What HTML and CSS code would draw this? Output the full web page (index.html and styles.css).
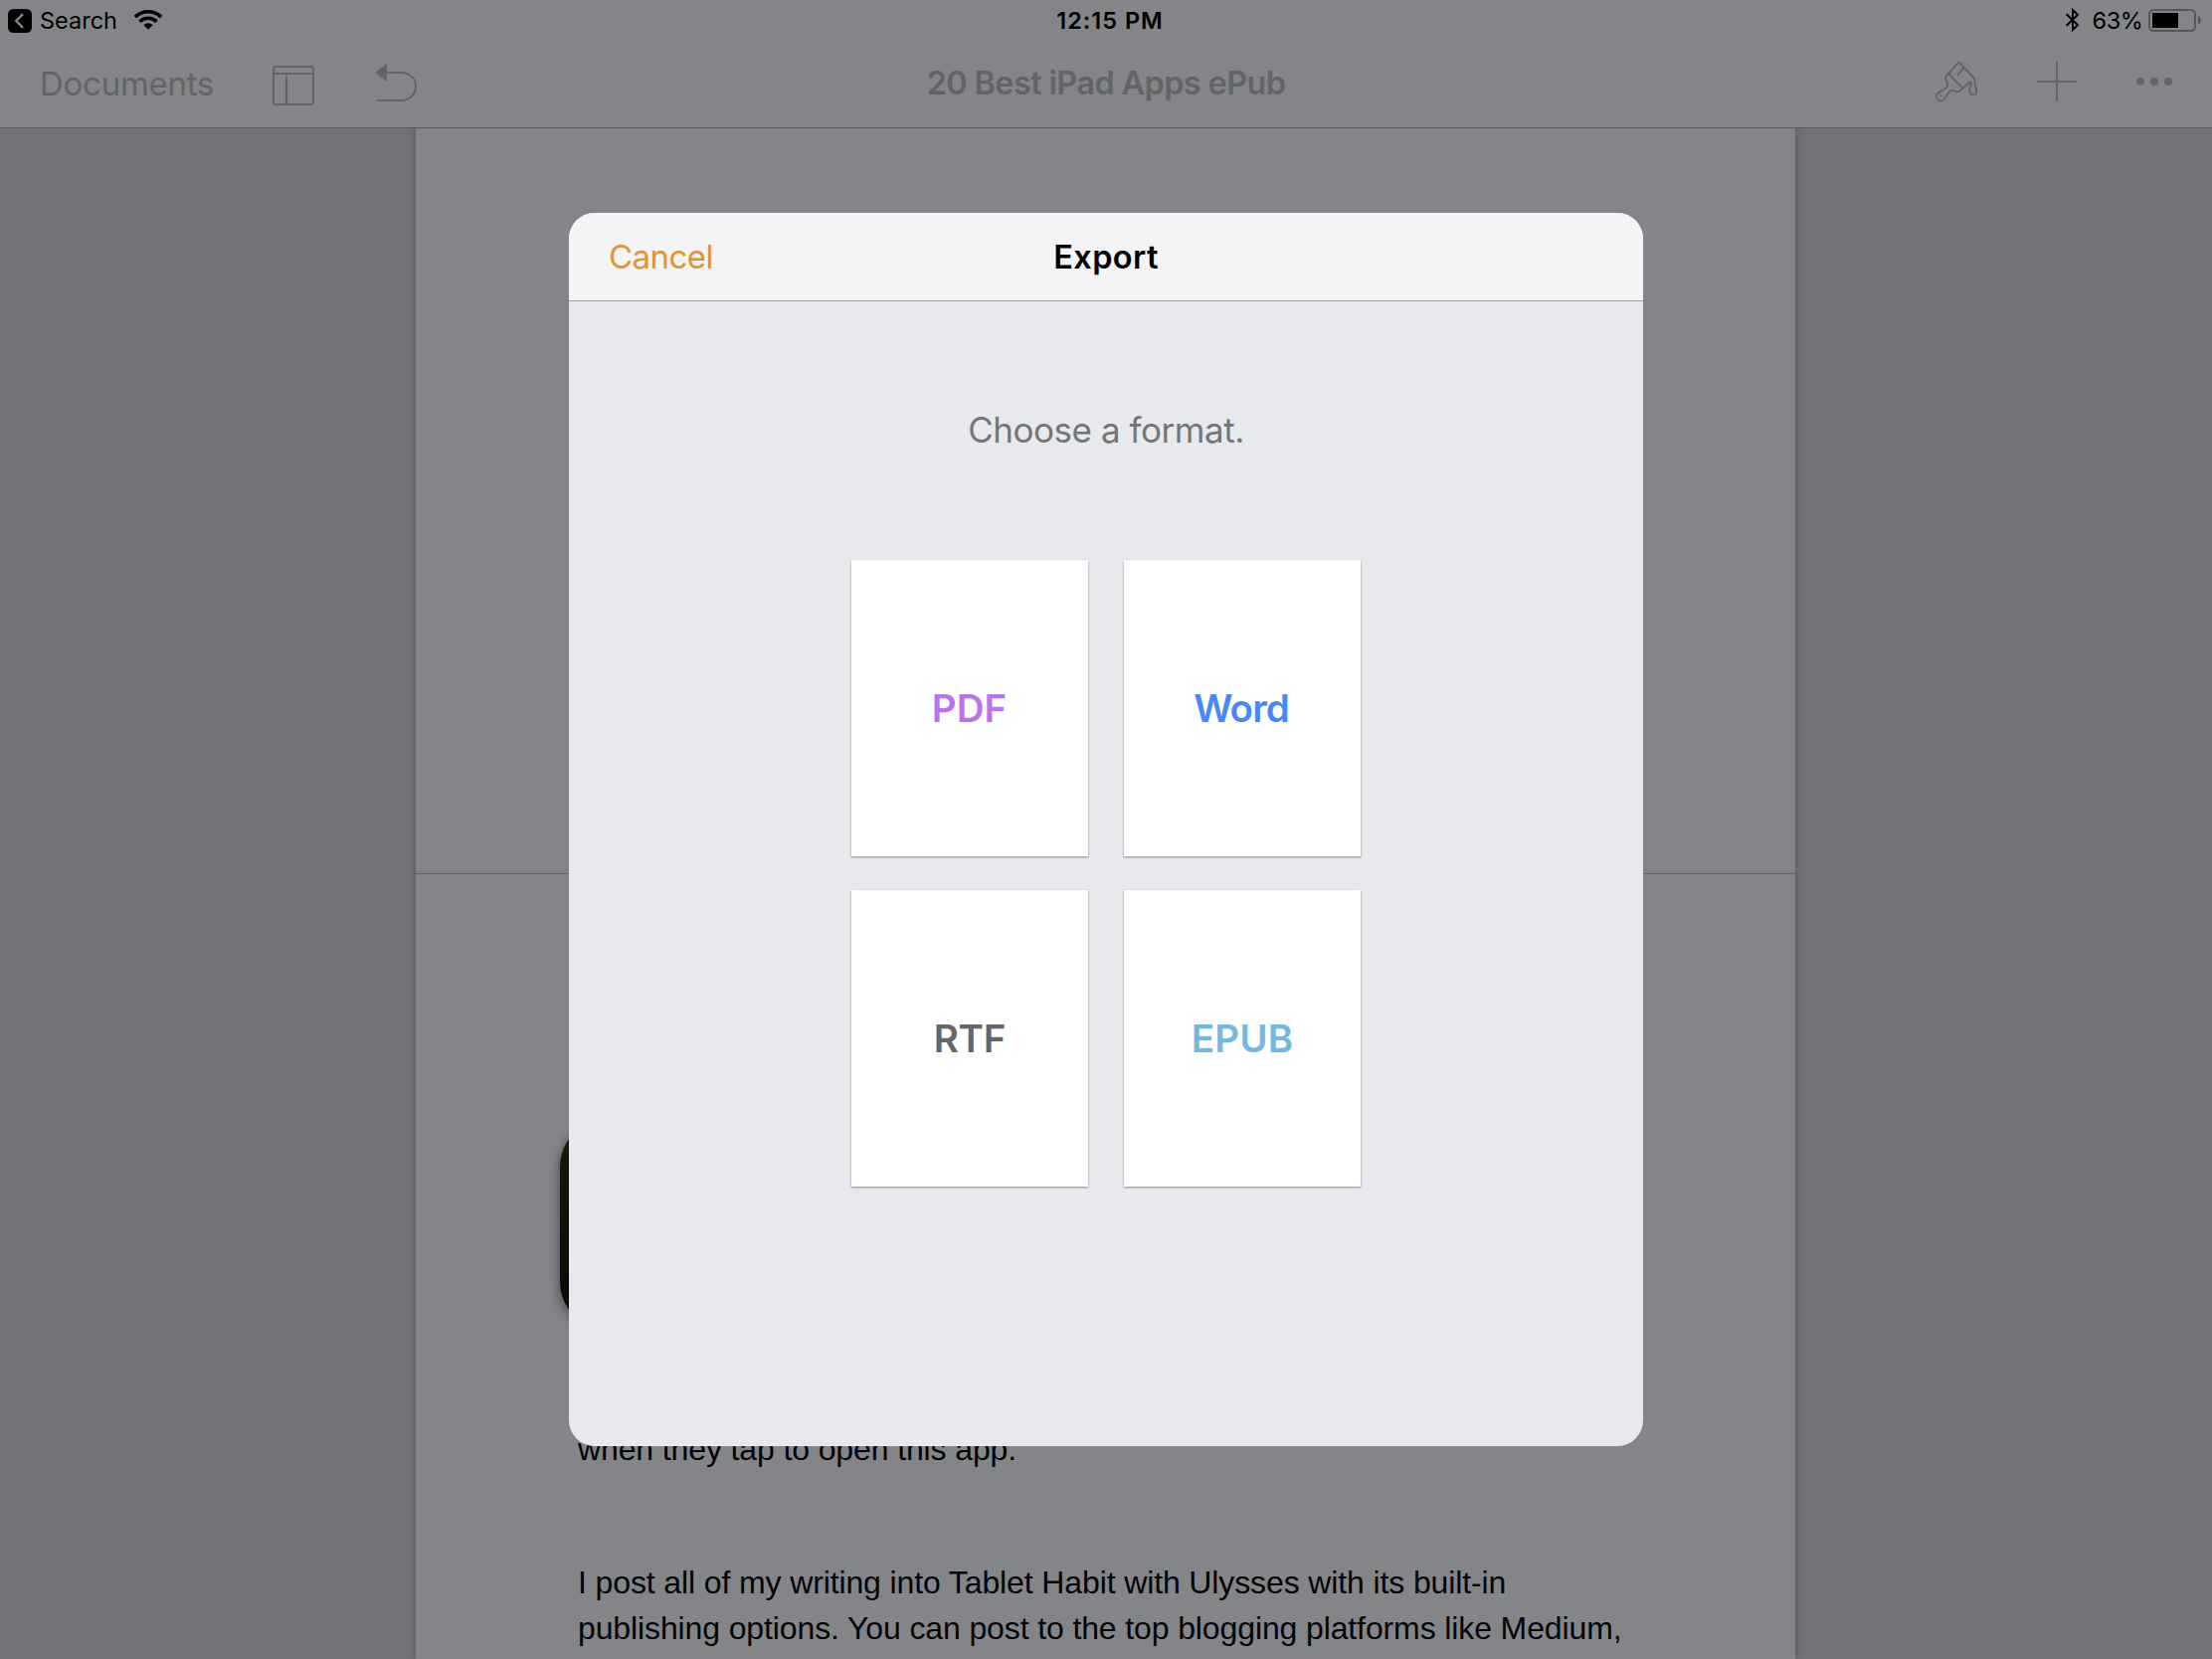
FILE: index.html
```
<!DOCTYPE html>
<html lang="en">
<head>
<meta charset="utf-8">
<title>Export</title>
<link rel="stylesheet" href="styles.css">
</head>
<body>
<div class="screen">
  <header class="chrome">
    <div class="status">
      <div class="status-side">
        <svg class="back-badge" width="24" height="24" viewBox="0 0 24 24"><rect width="24" height="24" rx="5.5" fill="#000"/><path d="M15 5.2 8.3 12l6.7 6.8" fill="none" stroke="#848589" stroke-width="2.4"/></svg>
        <span class="back-label">Search</span>
        <svg class="wifi" width="30" height="22" viewBox="0 0 30 22" fill="none" stroke="#000" stroke-width="3.7"><path d="M1.9 8.1a18.7 18.7 0 0 1 26.2 0"/><path d="M6.5 12.7a12.2 12.2 0 0 1 17 0"/><path d="M15 20.8l-4.7-4.7a6.8 6.8 0 0 1 9.4 0z" fill="#000" stroke="none"/></svg>
      </div>
      <span class="clock">12:15 PM</span>
      <div class="status-side status-right">
        <svg class="bluetooth" width="16" height="24" viewBox="0 0 16 24" fill="none" stroke="#000" stroke-width="1.9"><path d="M1.6 6.3 13 17 8 22V2l5 5L1.6 17.7"/></svg>
        <span class="percent">63%</span>
        <svg class="battery" width="54" height="24" viewBox="0 0 54 24"><rect x="1" y="1" width="46" height="21" rx="4.5" fill="none" stroke="#56575b" stroke-width="2"/><rect x="4" y="4" width="26" height="15" fill="#000"/><path d="M50 7.5c4 1.8 4 6.2 0 8z" fill="#56575b"/></svg>
      </div>
    </div>
    <nav class="toolbar">
      <div class="tools">
        <span class="documents">Documents</span>
        <svg class="panel-icon" width="42" height="40" viewBox="0 0 42 40" fill="none" stroke="#636468" stroke-width="2"><rect x="1" y="1" width="40" height="38" rx="2.5"/><path d="M1 8h40M14 8v31"/></svg>
        <svg class="undo-icon" width="44" height="40" viewBox="0 0 44 40"><path d="M0 9 12 0v18z" fill="#636468"/><path d="M11 9h16a14 14 0 0 1 0 28H2" fill="none" stroke="#636468" stroke-width="2"/></svg>
      </div>
      <h1 class="doc-title">20 Best iPad Apps ePub</h1>
      <div class="tools tools-right">
        <svg width="56" height="54" viewBox="0 0 56 54" fill="none" stroke="#636468" stroke-width="1.9" stroke-linejoin="round" stroke-linecap="round"><path d="M29.5 7.4 17.2 21c-2.4 2.8-1.2 4.8.3 7 1.6 2.4.8 4.2-1.3 5.7l-7 4.4c-2.6 1.7-3.1 5-.9 7.1 2.3 2.1 5.3 1.5 7-1.2l4.3-6.3c1.5-2.1 3.1-2.6 5.4-1.4 2.5 1.4 4.6 1.2 6.4-.6l8-7.2c1.8-1.5 2.7-.4 2.2 1.8-.6 2.8-1.9 5-1.1 7.6 1.1 3 6.1 3 6.7-.5.4-2.1-.8-4.1-1.1-6.4L45 23.7z"/><path d="M19.2 19 33 33.7M34.5 13.2 28.6 20"/><circle cx="11.3" cy="41.6" r="1" fill="#636468" stroke="none"/></svg>
        <svg class="plus-icon" width="40" height="40" viewBox="0 0 40 40"><path d="M20 0v40M0 20h40" stroke="#636468" stroke-width="2"/></svg>
        <svg class="more-icon" width="36" height="8" viewBox="0 0 36 8" fill="#636468"><circle cx="4" cy="4" r="4"/><circle cx="18" cy="4" r="4"/><circle cx="32" cy="4" r="4"/></svg>
      </div>
    </nav>
  </header>
  <main class="canvas">
    <div class="sheets">
      <section class="sheet sheet-first"></section>
      <section class="sheet sheet-second">
        <div class="app-art"></div>
        <p>when they tap to open this app.</p>
        <p>I post all of my writing into Tablet Habit with Ulysses with its built-in<br>publishing options. You can post to the top blogging platforms like Medium,</p>
      </section>
    </div>
  </main>
  <div class="backdrop">
    <section class="dialog">
      <header class="dialog-head">
        <span class="cancel">Cancel</span>
        <h2 class="dialog-title">Export</h2>
      </header>
      <div class="dialog-body">
        <p class="prompt">Choose a format.</p>
        <div class="formats">
          <div class="format pdf">PDF</div>
          <div class="format word">Word</div>
          <div class="format rtf">RTF</div>
          <div class="format epub">EPUB</div>
        </div>
      </div>
    </section>
  </div>
</div>
</body>
</html>
```

FILE: styles.css
```
* { box-sizing: border-box; margin: 0; padding: 0; }
body { font-family: Inter, sans-serif; background: #727377; }
svg { display: block; flex: none; }

.screen {
  position: relative;
  width: 2224px;
  height: 1668px;
  overflow: hidden;
  display: flex;
  flex-direction: column;
}

/* Status bar and toolbar */
.chrome {
  height: 129px;
  flex: none;
  background: #848589;
  border-bottom: 1px solid #5a5b5f;
  position: relative;
  z-index: 1;
}
.status {
  height: 42px;
  display: grid;
  grid-template-columns: 1fr auto 1fr;
  align-items: center;
  padding: 0 10px 0 8px;
  font-size: 23.5px;
  line-height: 42px;
  color: #000;
}
.status-side { display: flex; align-items: center; }
.status-right { justify-content: flex-end; }
.back-label { margin-left: 8px; }
.wifi { margin: -2px 0 0 16px; }
.clock { font-weight: 600; letter-spacing: 1px; margin-left: 10px; }
.bluetooth { margin: -2px 12px 0 0; }
.percent { letter-spacing: -0.4px; margin-right: 5.5px; }

.toolbar {
  height: 86px;
  display: grid;
  grid-template-columns: 1fr auto 1fr;
  align-items: start;
  padding: 0 40px;
  color: #636468;
}
.tools { display: flex; align-items: center; height: 86px; }
.tools-right { justify-content: flex-end; height: 80px; }
.documents { font-size: 33px; letter-spacing: -0.26px; width: 234px; line-height: 84px; margin-bottom: 2px; }
.panel-icon { margin-top: 2px; }
.undo-icon { margin: 0 0 2px 61px; }
.doc-title { font-size: 32.5px; font-weight: 600; letter-spacing: -0.65px; line-height: 84px; }
.plus-icon { margin-left: 52px; }
.more-icon { margin-left: 60px; }

/* Document behind the dialog */
.canvas {
  flex: 1;
  min-height: 0;
  display: flex;
  padding-left: 418px;
  background: #727377;
}
.sheets {
  width: 1387px;
  display: flex;
  flex-direction: column;
  box-shadow: 0 0 8px rgba(0, 0, 0, 0.3);
}
.sheet { background: #848589; }
.sheet-first {
  height: 749px;
  flex: none;
  background: linear-gradient(#848589 744px, #7e7f83);
}
.sheet-second {
  flex: 1;
  min-height: 0;
  overflow: hidden;
  border-top: 1px solid #626367;
  padding: 247px 100px 0 163px;
  font: 32px/46px "Liberation Sans", Arial, sans-serif;
  letter-spacing: -0.12px;
  color: #020306;
  white-space: nowrap;
}
.app-art {
  width: 210px;
  height: 210px;
  margin: 0 0 98px -18px;
  border-radius: 47px;
  background: linear-gradient(#1c1808, #050807);
  box-shadow: 0 3px 12px rgba(0, 0, 0, 0.5);
}
.sheet p { margin-bottom: 88px; }

/* Dialog */
.backdrop {
  position: absolute;
  inset: 0;
  z-index: 2;
  display: grid;
  place-items: center;
}
.dialog {
  width: 1080px;
  height: 1240px;
  border-radius: 26px;
  overflow: hidden;
  background: #e8e9ed;
}
.dialog-head {
  height: 89px;
  display: grid;
  grid-template-columns: 1fr auto 1fr;
  background: #f4f4f7;
  border-bottom: 1px solid #a0a1a5;
  padding: 0 40px;
  line-height: 88px;
}
.cancel { font-size: 33px; letter-spacing: -0.55px; color: #e29231; }
.dialog-title { font-size: 32.5px; font-weight: 600; letter-spacing: 0.4px; line-height: 90px; height: 88px; color: #000; }
.dialog-body { display: flex; flex-direction: column; align-items: center; }
.prompt {
  margin-top: 98px;
  font-size: 35px;
  line-height: 62px;
  letter-spacing: -0.45px;
  color: #747579;
}
.formats {
  margin-top: 100px;
  display: grid;
  grid-template-columns: 238px 238px;
  grid-auto-rows: 298px;
  gap: 34px 36px;
}
.format {
  display: grid;
  place-items: center;
  background: #fff;
  box-shadow: 0 1px 2px rgba(0, 0, 0, 0.4);
  font-size: 38.5px;
  font-weight: 600;
}
.pdf { color: #b873f0; padding-right: 1px; }
.word { color: #4688f7; letter-spacing: -0.9px; padding-right: 2px; }
.rtf { color: #666; letter-spacing: -0.2px; }
.epub { color: #73b8e0; letter-spacing: 0.2px; }
```
